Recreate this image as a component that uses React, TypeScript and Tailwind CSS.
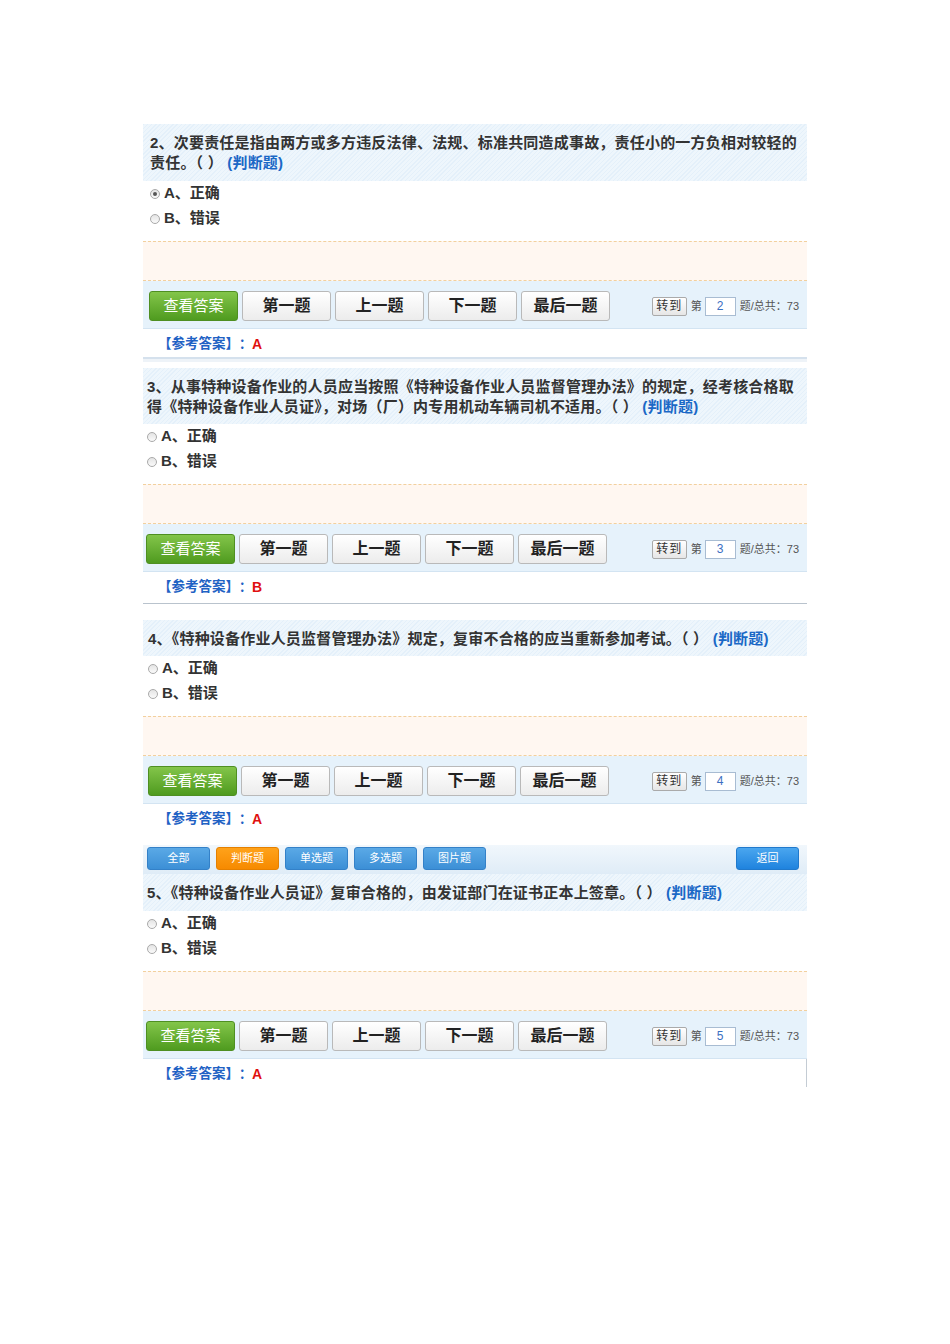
import React from "react";

interface Question {
  no: number;
  lines: string[];
  checked: boolean;
  answer: string;
  shift: "a" | "b" | "c";
  tallHead?: boolean;
  last?: boolean;
}

// 每题内容左移量（扫描件里每块略有偏移）
const shiftClass: Record<Question["shift"], string> = {
  a: "pl-[7px]",
  b: "pl-[4px]",
  c: "pl-[5px]",
};

const questions: Question[] = [
  {
    no: 2,
    lines: [
      "次要责任是指由两方或多方违反法律、法规、标准共同造成事故，责任小的一方负相对较轻的",
      "责任。（ ）",
    ],
    checked: true,
    answer: "A",
    shift: "a",
    tallHead: true,
  },
  {
    no: 3,
    lines: [
      "从事特种设备作业的人员应当按照《特种设备作业人员监督管理办法》的规定，经考核合格取",
      "得《特种设备作业人员证》，对场（厂）内专用机动车辆司机不适用。（ ）",
    ],
    checked: false,
    answer: "B",
    shift: "b",
  },
  {
    no: 4,
    lines: ["《特种设备作业人员监督管理办法》规定，复审不合格的应当重新参加考试。（ ）"],
    checked: false,
    answer: "A",
    shift: "c",
  },
  {
    no: 5,
    lines: ["《特种设备作业人员证》复审合格的，由发证部门在证书正本上签章。（ ）"],
    checked: false,
    answer: "A",
    shift: "b",
    tallHead: true,
    last: true,
  },
];

const navButtons = ["第一题", "上一题", "下一题", "最后一题"];

function Radio({ checked }: { checked: boolean }) {
  return (
    <span className="w-[10px] h-[10px] rounded-full border border-[#a9a9a9] bg-[linear-gradient(#e4e4e4,#fafafa)] flex items-center justify-center mr-[4px]">
      {checked && <span className="w-[4px] h-[4px] rounded-full bg-[#555]" />}
    </span>
  );
}

function QuestionBlock({ q }: { q: Question }) {
  const pl = shiftClass[q.shift];
  return (
    <div>
      {/* 题目 */}
      <div
        className={`bg-[repeating-linear-gradient(135deg,#e4f0fa_0px,#e4f0fa_1px,#eef6fc_1px,#eef6fc_3px)] pt-[9px] ${
          q.tallHead ? "pb-[8px]" : "pb-[7px]"
        } ${pl} text-[15px] leading-[20px] font-bold text-[#333] tracking-[0.2px]`}
      >
        {q.lines.map((line, i) => (
          <div key={i}>
            {i === 0 && `${q.no}、`}
            {line}
            {i === q.lines.length - 1 && (
              <span className="text-[#1a68c6]"> (判断题)</span>
            )}
          </div>
        ))}
      </div>

      {/* 选项 */}
      <div className={`h-[60px] ${pl} text-[15px] font-bold text-[#333]`}>
        <div className="h-[25px] flex items-center">
          <Radio checked={q.checked} />
          A、正确
        </div>
        <div className="h-[25px] flex items-center">
          <Radio checked={false} />
          B、错误
        </div>
      </div>

      {/* 答案解析区 */}
      <div className="h-[40px] border-y border-dashed border-[#f2d09e] bg-[#fff7f1]" />

      {/* 按钮栏 */}
      <div
        className={`h-[48px] bg-[#e6f2fb] border-b border-[#d3e4f2] flex items-start pt-[10px] pr-[8px] ${
          q.shift === "a" ? "pl-[6px]" : q.shift === "b" ? "pl-[3px]" : "pl-[5px]"
        }`}
      >
        <button className="w-[89px] h-[30px] rounded-[3px] bg-[linear-gradient(#83c54a,#4f9b1f)] border border-[#4f8f22] text-white text-[15px] mr-[4px]">
          查看答案
        </button>
        {navButtons.map((b) => (
          <button
            key={b}
            className="w-[89px] h-[30px] rounded-[3px] bg-[linear-gradient(#ffffff,#ececec)] border border-[#b9b9b9] text-[#222] text-[16px] font-bold mr-[4px]"
          >
            {b}
          </button>
        ))}
        <div className="ml-auto flex items-center h-[30px] text-[11px] text-[#555]">
          <span className="w-[35px] h-[19px] rounded-[2px] border border-[#aaa] bg-[linear-gradient(#ffffff,#e6e6e6)] flex items-center justify-center text-[#333] text-[12px] tracking-[1px]">
            转到
          </span>
          <span className="ml-[4px]">第</span>
          <span className="ml-[3px] w-[31px] h-[19px] bg-white border border-[#a8bcd2] flex items-center justify-center text-[#3b6fc2] text-[12px]">
            {q.no}
          </span>
          <span className="ml-[4px]">题/总共：73</span>
        </div>
      </div>

      {/* 参考答案 */}
      <div
        className={`h-[28px] pt-[2px] flex items-center pl-[15px] text-[13.5px] font-bold ${
          q.last ? "border-r border-[#c4ccd4]" : ""
        }`}
      >
        <span className="text-[#1f62c4]">【参考答案】</span>
        <span className="text-[#1f62c4] text-[13px]">：</span>
        <span className="text-[#e01010] text-[14px]">{q.answer}</span>
      </div>
    </div>
  );
}

const tabs = ["全部", "判断题", "单选题", "多选题", "图片题"];

export default function App() {
  return (
    <div className="w-[950px] h-[1344px] bg-white font-['Liberation_Sans','Noto_Sans_CJK_SC',sans-serif]">
      <div className="ml-[143px] w-[664px] pt-[124px]">
        <QuestionBlock q={questions[0]} />

        {/* 分隔 */}
        <div className="h-[5px] border-t-2 border-[#d5e1ed] bg-[#eef3f8] mb-[6px]" />

        <QuestionBlock q={questions[1]} />

        <div className="h-[3px]" />
        <div className="h-px bg-[#b9c3cd] mb-[16px]" />

        <QuestionBlock q={questions[2]} />

        {/* 题型切换 */}
        <div className="mt-[13px] h-[29px] bg-[linear-gradient(#f1f7fc,#dfecf7)] flex items-start pt-[2px] pl-[4px] pr-[8px]">
          {tabs.map((t) => (
            <span
              key={t}
              className={`w-[63px] h-[23px] mr-[6px] rounded-[3px] flex items-center justify-center text-white text-[11px] border ${
                t === "判断题"
                  ? "bg-[linear-gradient(#ffa21a,#f68a00)] border-[#e58000]"
                  : "bg-[linear-gradient(#5aa9e6,#3c8fd6)] border-[#3481c8]"
              }`}
            >
              {t}
            </span>
          ))}
          <span className="ml-auto w-[63px] h-[23px] rounded-[3px] flex items-center justify-center text-white text-[11px] bg-[linear-gradient(#4aa6ef,#1f83de)] border border-[#2079cc]">
            返回
          </span>
        </div>

        <QuestionBlock q={questions[3]} />
      </div>
    </div>
  );
}
